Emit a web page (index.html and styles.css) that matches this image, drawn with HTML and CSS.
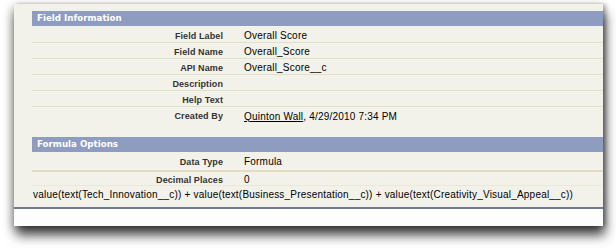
FILE: index.html
```html
<!DOCTYPE html>
<html>
<head>
<meta charset="utf-8">
<link rel="stylesheet" href="styles.css">
</head>
<body>
<div class="card">
  <div class="content">
    <div class="section-head">Field Information</div>
    <div class="row first"><div class="label">Field Label</div><div class="value">Overall Score</div></div>
    <div class="row"><div class="label">Field Name</div><div class="value">Overall_Score</div></div>
    <div class="row"><div class="label">API Name</div><div class="value">Overall_Score__c</div></div>
    <div class="row"><div class="label">Description</div><div class="value"></div></div>
    <div class="row"><div class="label">Help Text</div><div class="value"></div></div>
    <div class="row last"><div class="label">Created By</div><div class="value"><a class="link" href="#">Quinton Wall</a>, 4/29/2010 7:34 PM</div></div>

    <div class="section-head second">Formula Options</div>
    <div class="row thick"><div class="label">Data Type</div><div class="value">Formula</div></div>
    <div class="row faint"><div class="label">Decimal Places</div><div class="value">0</div></div>
    <div class="formula">value(text(Tech_Innovation__c)) + value(text(Business_Presentation__c)) + value(text(Creativity_Visual_Appeal__c))</div>
  </div>
  <div class="footer"></div>
</div>
</body>
</html>
```
FILE: styles.css
```css
html, body {
  margin: 0;
  padding: 0;
  background: #ffffff;
}
body {
  min-height: 249px;
  box-sizing: border-box;
  padding: 4px 0 0 14px;
  font-family: "Liberation Sans", Arial, sans-serif;
}
.card {
  width: 589px;
  background: #f3f2ea;
  box-shadow: 2px 9px 11px rgba(0, 0, 0, 0.75), -3px 2px 8px rgba(0, 0, 0, 0.18), 3px 0 4px rgba(0, 0, 0, 0.25);
}
.content {
  padding: 7px 0 5px 18px;
}
.section-head {
  height: 15px;
  line-height: 15px;
  background: #8d9cbf;
  color: #ffffff;
  font-family: "DejaVu Sans", Verdana, sans-serif;
  font-weight: bold;
  font-size: 8.7px;
  padding-left: 5px;
}
.section-head.second {
  margin-top: 14px;
}
.row {
  display: flex;
  align-items: center;
  border-bottom: 1px solid #e3dfcb;
  box-sizing: border-box;
  height: 16px;
  padding-top: 2px;
}
.row.first {
  height: 17px;
  padding-top: 3px;
}
.row.last {
  border-bottom: none;
}
.row.thick {
  height: 20px;
  padding-top: 1px;
  border-bottom: 2px solid #e4dcbf;
}
.row.faint {
  height: 14px;
  padding-top: 2px;
  border-bottom: 1px solid #ebe8da;
}
.label {
  width: 191px;
  text-align: right;
  font-weight: bold;
  font-size: 9px;
  color: #333333;
  letter-spacing: 0.1px;
}
.value {
  padding-left: 21px;
  font-size: 10px;
  color: #000000;
  letter-spacing: 0.2px;
}
.link {
  color: #000000;
  text-decoration: underline;
}
.formula {
  padding: 3px 0 0 1px;
  height: 13px;
  font-size: 10px;
  color: #000000;
  white-space: nowrap;
  letter-spacing: 0.2px;
}
.footer {
  border-top: 2px solid #6e7b90;
  height: 17px;
  background: #fdfdfb;
}
```
